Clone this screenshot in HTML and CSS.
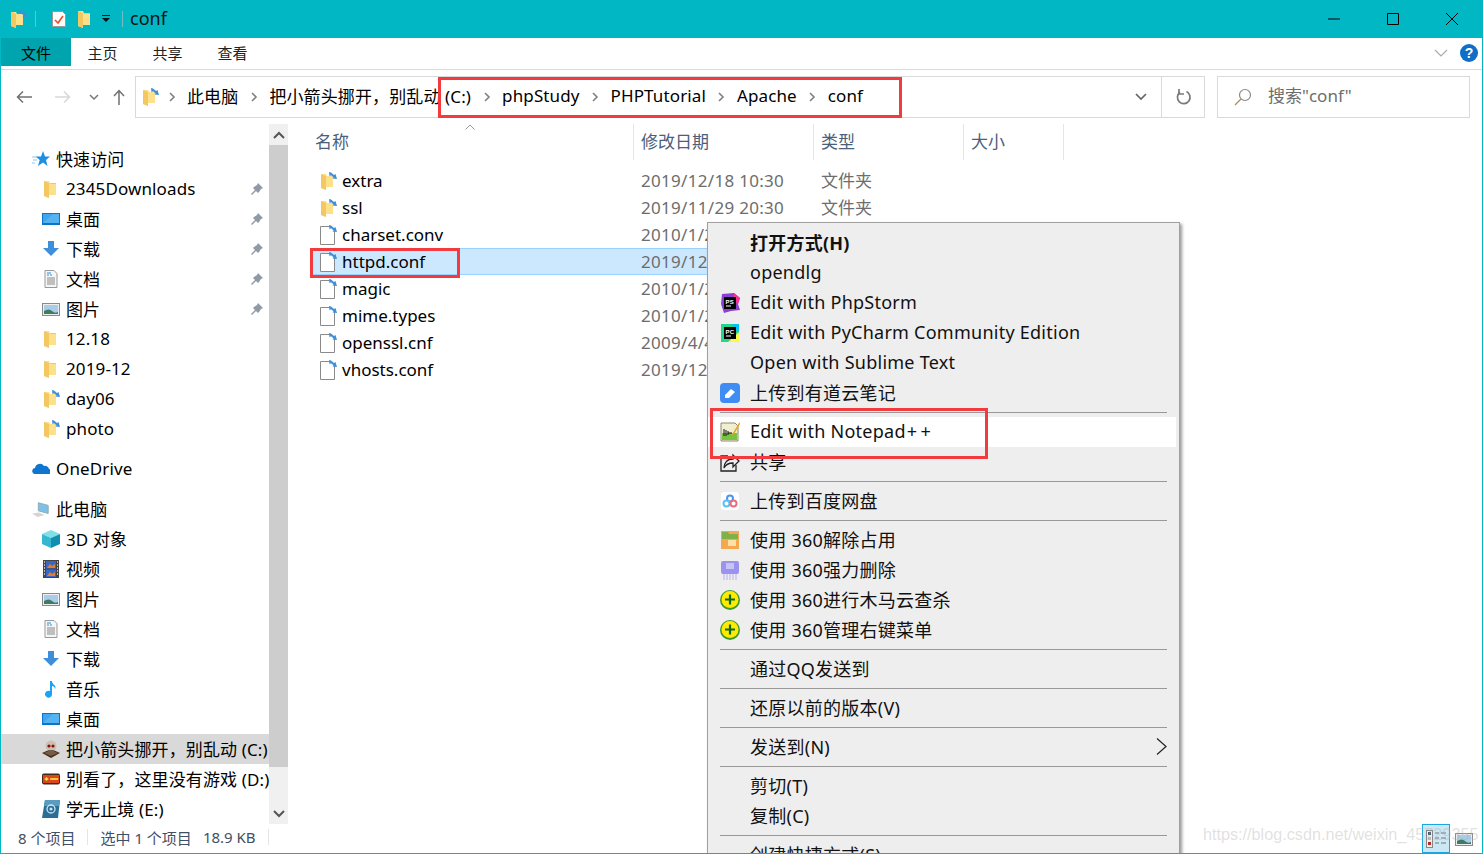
FILE: index.html
```html
<!DOCTYPE html>
<html lang="zh-CN">
<head>
<meta charset="utf-8">
<title>conf</title>
<link rel="stylesheet" href="styles.css">
</head>
<body>
<svg class="defs" width="0" height="0" aria-hidden="true">
  <defs>
    <symbol id="folder" viewBox="0 0 18 18"><path d="M2 1h5l1 2h6v12H7v3l-5-2z" fill="#fde08a"/><path d="M2 1l5 2v15l-5-2z" fill="#f3c862"/><path d="M8 3h6v1H8z" fill="#f3c862"/></symbol>
    <symbol id="folderlink" viewBox="0 0 18 18"><path d="M2 2h5l1 2h6v11H7v3l-5-2z" fill="#fde08a"/><path d="M2 2l5 2v14l-5-2z" fill="#f3c862"/><path d="M10 0l2 .5 3 2.500 1.500-1L18 7l-4.500-.5 1-1.200-2.500-2-1.500 1z" fill="#3f8fd8"/></symbol>
    <symbol id="file" viewBox="0 0 18 20"><path d="M1.500 1.500h10l4 4v14h-14z" fill="#fff" stroke="#8a8a8a"/><path d="M10 0l2 .5 3 2.500 1.500-1L18 7l-4.500-.5 1-1.200-2.500-2-1.500 1z" fill="#3f8fd8"/></symbol>
    <symbol id="star" viewBox="0 0 18 18"><path d="M11 1l2 5.500h5l-4 3.500 1.500 6-4.500-3.500L6 16l1.700-6-4-3.500H9z" fill="#1c8fe3"/><path d="M0 7h5M1 10h4M0 13h3" stroke="#8cc6f0"/></symbol>
    <symbol id="desk" viewBox="0 0 18 18"><rect x="0" y="3" width="18" height="12" fill="#0d75c8"/><path d="M1 4h16v9H1z" fill="#3fa5ee"/><path d="M1 13L11 4h6v9z" fill="#54b4f2"/></symbol>
    <symbol id="down" viewBox="0 0 18 18"><path d="M6 1h6v7h5l-8 8-8-8h5z" fill="#3d8fdc"/></symbol>
    <symbol id="doc" viewBox="0 0 18 18"><path d="M3 .5h9l3 3v14H3z" fill="#f6f6f6" stroke="#999"/><path d="M5 3h4M5 5h2M8 5h2" stroke="#2f8ed6"/><path d="M5 8h8M5 10h8M5 12h8M5 14h8" stroke="#888"/></symbol>
    <symbol id="pic" viewBox="0 0 18 18"><rect x=".5" y="3.500" width="17" height="12" fill="#eee" stroke="#8a8a8a"/><rect x="2" y="5" width="14" height="9" fill="#a9cde8"/><path d="M2 11q5-3 8 0t6 1v2H2z" fill="#3f7a62"/></symbol>
    <symbol id="pin" viewBox="0 0 14 14"><path d="M8 1l5 5-2 1-2 3-1 1-2-2-4 4-1-1 4-4-2-2 1-1 3-2z" fill="#8f9aa6"/></symbol>
    <symbol id="cloud" viewBox="0 0 18 18"><path d="M1 13a3 3 0 0 1 2-5 5 5 0 0 1 9-2 4 4 0 0 1 5 3 2.500 2.500 0 0 1-1 5H3a2 2 0 0 1-2-1z" fill="#0f75cf"/></symbol>
    <symbol id="pc" viewBox="0 0 20 18"><path d="M7 2l11 3v9L7 11z" fill="#7fc0e8" stroke="#8aa"/><path d="M0 14l8-1 6 3-8 2z" fill="#d5d5d5"/></symbol>
    <symbol id="cube" viewBox="0 0 18 18"><path d="M9 0l9 4-9 4-9-4z" fill="#7fe0ea"/><path d="M0 4l9 4v10l-9-4z" fill="#35b8cf"/><path d="M18 4L9 8v10l9-4z" fill="#118fb0"/></symbol>
    <symbol id="film" viewBox="0 0 18 18"><rect x="1" width="16" height="18" fill="#444"/><rect x="4" y="1" width="10" height="7.500" fill="#3568c8"/><rect x="4" y="9.500" width="10" height="7.500" fill="#3568c8"/><path d="M5 8l3-4 2 2 3-2v4zM5 16l3-4 2 2 3-2v4z" fill="#e08030"/><path d="M2 2h1M2 5h1M2 8h1M2 11h1M2 14h1M15 2h1M15 5h1M15 8h1M15 11h1M15 14h1" stroke="#ddd" stroke-width="1.500"/></symbol>
    <symbol id="note" viewBox="0 0 18 18"><path d="M8 1h2c0 4 5 4 3 8 0-2-2-3-3-3v8a3.500 3.500 0 1 1-2-3z" fill="#1fa2f2"/></symbol>
    <symbol id="skull" viewBox="0 0 18 18"><path d="M0 13l9-4 9 4-9 5z" fill="#4a2f20"/><path d="M2 13l7-3 7 3-7 3z" fill="#7d5a3e"/><circle cx="9" cy="6" r="5.500" fill="#cfbfae"/><circle cx="7" cy="6" r="1.600" fill="#8a1010"/><circle cx="11" cy="6" r="1.600" fill="#8a1010"/><path d="M6 10h6v3H6z" fill="#6d5f52"/></symbol>
    <symbol id="game" viewBox="0 0 20 18"><rect y="3" width="20" height="12" rx="2" fill="#3a2a20"/><rect x="1" y="4.500" width="18" height="9" fill="#d9481c"/><path d="M3 9h4M5 7v4" stroke="#ffe14a" stroke-width="1.500"/><rect x="9" y="8" width="9" height="2" fill="#ffd23a"/></symbol>
    <symbol id="edrive" viewBox="0 0 18 18"><path d="M3 0h15l-2 18H0z" fill="#2b6f96"/><path d="M3 0h15l-1 6H2z" fill="#5a9cc0"/><circle cx="9" cy="9" r="4" fill="none" stroke="#cde6f5" stroke-width="1.300"/><circle cx="9" cy="9" r="1.500" fill="#cde6f5"/></symbol>
    <symbol id="ps" viewBox="0 0 20 20"><path d="M2 1l12-1 6 5-2 6 2 6-9 1-7 2-3-9z" fill="#8d3fd1"/><path d="M14 0l6 5-2 6-5-4z" fill="#ff318c"/><rect x="4" y="4" width="12" height="12" fill="#000"/><path d="M6 13h5" stroke="#fff"/><text x="5.500" y="10.500" class="logo-text">PS</text></symbol>
    <symbol id="pyc" viewBox="0 0 20 20"><path d="M1 1h18v18H1z" fill="#21d789"/><path d="M12 1h7v10z" fill="#07c3f2"/><path d="M8 19h11V9z" fill="#fcf84a"/><rect x="4" y="4" width="12" height="12" fill="#000"/><path d="M6 13h5" stroke="#fff"/><text x="5.500" y="10.500" class="logo-text">PC</text></symbol>
    <symbol id="youdao" viewBox="0 0 20 20"><rect width="20" height="20" rx="4" fill="#3f8cf5"/><path d="M5 12l6-6 4 3-6 6H5z" fill="#fff"/></symbol>
    <symbol id="npp" viewBox="0 0 20 20"><path d="M1 1h14l3 3v15H1z" fill="#f0efd2" stroke="#8a8a70"/><path d="M2 11h15v7H2z" fill="#78c440"/><path d="M4 7v7M6 8v6M8 9v4M8 11h4" stroke="#111" stroke-width="1"/><path d="M19.500 0l-6 10-2.500 4 3.500-2.500L20 2z" fill="#eba522"/></symbol>
    <symbol id="share" viewBox="0 0 20 20"><path d="M13 3v4C7 7 4 11 4 16c2-4 5-5 9-5v4l6-6z" fill="#eee" stroke="#222" stroke-width="1.300"/><path d="M8 4H1v15h15v-6" fill="none" stroke="#222" stroke-width="1.300"/></symbol>
    <symbol id="baidu" viewBox="0 0 20 20"><rect x="1" y="1" width="18" height="18" rx="3" fill="#fff"/><circle cx="10" cy="7.500" r="3" fill="none" stroke="#4b93f2" stroke-width="2"/><circle cx="6.500" cy="12.500" r="3" fill="none" stroke="#5fc0f0" stroke-width="2"/><circle cx="13.500" cy="12.500" r="3" fill="none" stroke="#f26a7a" stroke-width="2"/></symbol>
    <symbol id="s360a" viewBox="0 0 20 20"><rect x="1" y="1" width="18" height="18" fill="#f4a850"/><path d="M2 2h6l1 2h9v5H2z" fill="#7fb04a"/><rect x="8" y="10" width="8" height="6" fill="#fbe0a8"/></symbol>
    <symbol id="s360b" viewBox="0 0 20 20"><rect x="1" y="1" width="18" height="13" rx="2" fill="#9c93ef"/><rect x="6" y="3" width="8" height="6" fill="#c9c4f7"/><path d="M4 14v6M7 14v6M10 14v6M13 14v6M16 14v6" stroke="#b5aff3"/></symbol>
    <symbol id="s360c" viewBox="0 0 20 20"><circle cx="10" cy="10" r="10" fill="#3f9a2c"/><circle cx="10" cy="9.500" r="8.500" fill="#ffea00"/><path d="M10 4.500v10M5 9.500h10" stroke="#0a6a20" stroke-width="2.200"/></symbol>
    <symbol id="lchev" viewBox="0 0 10 12"><path d="M3 2l4 4-4 4" fill="none" stroke="#808080" stroke-width="1.600"/></symbol>
  </defs>
</svg>

<div class="window">
  <header class="titlebar">
    <svg class="ic18 qa1"><use href="#folderlink"/></svg>
    <span class="tsep"></span>
    <svg class="qa2" width="14" height="16" viewBox="0 0 14 16"><path d="M.5.500h10l3 3v12H.5z" fill="#fbfbfb" stroke="#999"/><path d="M3 9l3 3 5-7" fill="none" stroke="#e5502a" stroke-width="1.600"/></svg>
    <svg class="ic18 qa3"><use href="#folder"/></svg>
    <svg class="qa4" width="8" height="8" viewBox="0 0 8 8"><path d="M0 0h8v1H0zM0 3h8L4 7z" fill="#111"/></svg>
    <span class="tsep tsep-b"></span>
    <span class="title">conf</span>
    <div class="winbtns">
      <svg width="12" height="12" viewBox="0 0 12 12"><path d="M0 6h12" stroke="#000"/></svg>
      <svg width="12" height="12" viewBox="0 0 12 12"><path d="M.5.500h11v11H.5z" fill="none" stroke="#000"/></svg>
      <svg width="12" height="12" viewBox="0 0 12 12"><path d="M0 0l12 12M12 0L0 12" stroke="#000"/></svg>
    </div>
  </header>

  <nav class="ribbon">
    <span class="tab tab-file">文件</span>
    <span class="tab">主页</span>
    <span class="tab">共享</span>
    <span class="tab">查看</span>
    <svg class="ribchev" width="14" height="8" viewBox="0 0 14 8"><path d="M1 1l6 6 6-6" fill="none" stroke="#aaa" stroke-width="1.200"/></svg>
    <span class="help">?</span>
  </nav>

  <div class="addrrow">
    <svg class="navbtn nb-back" width="16" height="14" viewBox="0 0 16 14"><path d="M16 7H2M7 1.500L1.500 7 7 12.500" fill="none" stroke="#707070" stroke-width="1.500"/></svg>
    <svg class="navbtn nb-fwd" width="16" height="14" viewBox="0 0 16 14"><path d="M0 7h14M9 1.500L14.500 7 9 12.500" fill="none" stroke="#d8d8d8" stroke-width="1.500"/></svg>
    <svg class="navbtn nb-drop" width="10" height="7" viewBox="0 0 10 7"><path d="M1 1l4 4 4-4" fill="none" stroke="#777" stroke-width="1.500"/></svg>
    <svg class="navbtn nb-up" width="12" height="16" viewBox="0 0 12 16"><path d="M6 16V2M1 7l5-5.500L11 7" fill="none" stroke="#707070" stroke-width="1.500"/></svg>
    <div class="addr">
      <div class="crumbs">
        <svg class="ic18"><use href="#folderlink"/></svg>
        <svg class="chev first"><use href="#lchev"/></svg><span>此电脑</span>
        <svg class="chev"><use href="#lchev"/></svg><span>把小箭头挪开，别乱动 (C:)</span>
        <svg class="chev"><use href="#lchev"/></svg><span>phpStudy</span>
        <svg class="chev"><use href="#lchev"/></svg><span>PHPTutorial</span>
        <svg class="chev"><use href="#lchev"/></svg><span>Apache</span>
        <svg class="chev"><use href="#lchev"/></svg><span>conf</span>
      </div>
      <div class="addrdrop"><svg width="12" height="8" viewBox="0 0 12 8"><path d="M1 1l5 5 5-5" fill="none" stroke="#666" stroke-width="1.700"/></svg></div>
      <div class="refresh"><svg width="16" height="16" viewBox="0 0 16 16"><path d="M10.500 2.600A6.300 6.300 0 1 1 4 3.200" fill="none" stroke="#7a7a7a" stroke-width="1.700"/><path d="M3 0v5h5" fill="none" stroke="#7a7a7a" stroke-width="1.700"/></svg></div>
    </div>
    <div class="search">
      <svg width="18" height="18" viewBox="0 0 18 18"><circle cx="11" cy="7" r="5.500" fill="none" stroke="#8a8a8a" stroke-width="1.200"/><path d="M7 11l-6 6" stroke="#b08a60" stroke-width="1.300"/></svg>
      <span>搜索"conf"</span>
    </div>
  </div>

  <div class="body">
    <aside class="sidebar">
      <div class="navlist">
        <div class="nav top"><svg class="ic18"><use href="#star"/></svg><span>快速访问</span></div>
        <div class="nav"><svg class="ic18"><use href="#folder"/></svg><span>2345Downloads</span><svg class="pin"><use href="#pin"/></svg></div>
        <div class="nav"><svg class="ic18"><use href="#desk"/></svg><span>桌面</span><svg class="pin"><use href="#pin"/></svg></div>
        <div class="nav"><svg class="ic18"><use href="#down"/></svg><span>下载</span><svg class="pin"><use href="#pin"/></svg></div>
        <div class="nav"><svg class="ic18"><use href="#doc"/></svg><span>文档</span><svg class="pin"><use href="#pin"/></svg></div>
        <div class="nav"><svg class="ic18"><use href="#pic"/></svg><span>图片</span><svg class="pin"><use href="#pin"/></svg></div>
        <div class="nav"><svg class="ic18"><use href="#folder"/></svg><span>12.18</span></div>
        <div class="nav"><svg class="ic18"><use href="#folder"/></svg><span>2019-12</span></div>
        <div class="nav"><svg class="ic18"><use href="#folderlink"/></svg><span>day06</span></div>
        <div class="nav"><svg class="ic18"><use href="#folderlink"/></svg><span>photo</span></div>
        <div class="nav top gap"><svg class="ic18"><use href="#cloud"/></svg><span>OneDrive</span></div>
        <div class="nav top gap"><svg class="ic18"><use href="#pc"/></svg><span>此电脑</span></div>
        <div class="nav"><svg class="ic18"><use href="#cube"/></svg><span>3D 对象</span></div>
        <div class="nav"><svg class="ic18"><use href="#film"/></svg><span>视频</span></div>
        <div class="nav"><svg class="ic18"><use href="#pic"/></svg><span>图片</span></div>
        <div class="nav"><svg class="ic18"><use href="#doc"/></svg><span>文档</span></div>
        <div class="nav"><svg class="ic18"><use href="#down"/></svg><span>下载</span></div>
        <div class="nav"><svg class="ic18"><use href="#note"/></svg><span>音乐</span></div>
        <div class="nav"><svg class="ic18"><use href="#desk"/></svg><span>桌面</span></div>
        <div class="nav sel"><svg class="ic18"><use href="#skull"/></svg><span>把小箭头挪开，别乱动 (C:)</span></div>
        <div class="nav"><svg class="ic18"><use href="#game"/></svg><span>别看了，这里没有游戏 (D:)</span></div>
        <div class="nav"><svg class="ic18"><use href="#edrive"/></svg><span>学无止境 (E:)</span></div>
      </div>
      <div class="scroll">
        <div class="sbtn"><svg width="12" height="8" viewBox="0 0 12 8"><path d="M1 7l5-5 5 5" fill="none" stroke="#555" stroke-width="2"/></svg></div>
        <div class="thumb"></div>
        <div class="track"></div>
        <div class="sbtn"><svg width="12" height="8" viewBox="0 0 12 8"><path d="M1 1l5 5 5-5" fill="none" stroke="#555" stroke-width="2"/></svg></div>
      </div>
    </aside>

    <main class="files">
      <svg class="sortcaret" width="10" height="6" viewBox="0 0 10 6"><path d="M.5 5.500L5 1l4.500 4.500" fill="none" stroke="#9a9a9a"/></svg>
      <div class="head">
        <span class="c-name">名称</span>
        <span class="c-date">修改日期</span>
        <span class="c-type">类型</span>
        <span class="c-size">大小</span>
      </div>
      <div class="rows">
        <div class="row"><span class="n"><svg class="ic18"><use href="#folderlink"/></svg>extra</span><span class="c-date d">2019/12/18 10:30</span><span class="c-type d">文件夹</span></div>
        <div class="row"><span class="n"><svg class="ic18"><use href="#folderlink"/></svg>ssl</span><span class="c-date d">2019/11/29 20:30</span><span class="c-type d">文件夹</span></div>
        <div class="row"><span class="n"><svg class="ic-file"><use href="#file"/></svg>charset.conv</span><span class="c-date d">2010/1/27 18:13</span></div>
        <div class="row selected"><span class="n"><svg class="ic-file"><use href="#file"/></svg>httpd.conf</span><span class="c-date d">2019/12/18 10:30</span></div>
        <div class="row"><span class="n"><svg class="ic-file"><use href="#file"/></svg>magic</span><span class="c-date d">2010/1/27 18:13</span></div>
        <div class="row"><span class="n"><svg class="ic-file"><use href="#file"/></svg>mime.types</span><span class="c-date d">2010/1/27 18:13</span></div>
        <div class="row"><span class="n"><svg class="ic-file"><use href="#file"/></svg>openssl.cnf</span><span class="c-date d">2009/4/4 20:30</span></div>
        <div class="row"><span class="n"><svg class="ic-file"><use href="#file"/></svg>vhosts.conf</span><span class="c-date d">2019/12/18 10:30</span></div>
      </div>
    </main>
  </div>

  <footer class="status">
    <span class="st1">8 个项目</span>
    <span class="st-sep"></span>
    <span class="st2">选中 1 个项目</span>
    <span class="st3">18.9 KB</span>
    <span class="st-sep"></span>
    <div class="views">
      <span class="view on"><svg width="20" height="18" viewBox="0 0 20 18"><rect x=".5" y=".5" width="6" height="17" fill="#eee" stroke="#888"/><rect x="2" y="2" width="3" height="3" fill="#456"/><rect x="2" y="7" width="3" height="3" fill="#bbb"/><rect x="2" y="12" width="3" height="3" fill="#b03020"/><path d="M9 3h4M15 3h5M9 8h4M15 8h5M9 13h4M15 13h5" stroke="#777"/></svg></span>
      <span class="view plain"><svg width="18" height="18"><use href="#pic"/></svg></span>
    </div>
    <span class="watermark">https://blog.csdn.net/weixin_45729355</span>
  </footer>

  <div class="menu">
    <div class="mi bold"><span class="mic"></span>打开方式(H)</div>
    <div class="mi"><span class="mic"></span>opendlg</div>
    <div class="mi"><svg class="mic"><use href="#ps"/></svg>Edit with PhpStorm</div>
    <div class="mi"><svg class="mic"><use href="#pyc"/></svg>Edit with PyCharm Community Edition</div>
    <div class="mi"><span class="mic"></span>Open with Sublime Text</div>
    <div class="mi"><svg class="mic"><use href="#youdao"/></svg>上传到有道云笔记</div>
    <hr class="msep">
    <div class="mi hover"><svg class="mic"><use href="#npp"/></svg>Edit with Notepad<span class="pp">++</span></div>
    <div class="mi"><svg class="mic"><use href="#share"/></svg>共享</div>
    <hr class="msep">
    <div class="mi"><svg class="mic"><use href="#baidu"/></svg>上传到百度网盘</div>
    <hr class="msep">
    <div class="mi"><svg class="mic"><use href="#s360a"/></svg>使用 360解除占用</div>
    <div class="mi"><svg class="mic"><use href="#s360b"/></svg>使用 360强力删除</div>
    <div class="mi"><svg class="mic"><use href="#s360c"/></svg>使用 360进行木马云查杀</div>
    <div class="mi"><svg class="mic"><use href="#s360c"/></svg>使用 360管理右键菜单</div>
    <hr class="msep">
    <div class="mi"><span class="mic"></span>通过QQ发送到</div>
    <hr class="msep">
    <div class="mi"><span class="mic"></span>还原以前的版本(V)</div>
    <hr class="msep">
    <div class="mi"><span class="mic"></span>发送到(N)<svg class="subarrow" width="11" height="17" viewBox="0 0 11 17"><path d="M1 .5l9 8-9 8" fill="none" stroke="#222" stroke-width="1.200"/></svg></div>
    <hr class="msep">
    <div class="mi"><span class="mic"></span>剪切(T)</div>
    <div class="mi"><span class="mic"></span>复制(C)</div>
    <hr class="msep">
    <div class="mi"><span class="mic"></span>创建快捷方式(S)</div>
  </div>

  <div class="redbox rb-addr"></div>
  <div class="redbox rb-file"></div>
  <div class="redbox rb-menu"></div>
</div>
</body>
</html>
```

FILE: styles.css
```css
* { box-sizing: border-box; }
html, body { margin: 0; padding: 0; height: 100%; overflow: hidden; }
body { background: #fff; font-family: "Noto Sans", "Noto Sans CJK SC", sans-serif; font-size: 17px; color: #000; }
.defs { position: absolute; }
.logo-text { font: 700 6px "Liberation Sans", sans-serif; fill: #fff; }

.window { position: relative; width: 1483px; height: 854px; border: 1px solid #00b7c3; border-top: 0; display: flex; flex-direction: column; overflow: hidden; }

.titlebar { height: 38px; flex: none; margin: 0 -1px; background: #00b7c3; display: flex; align-items: center; }
.ic18 { width: 18px; height: 18px; flex: none; }
.ic-file { width: 18px; height: 20px; flex: none; }
.qa1 { margin-left: 9px; }
.tsep { width: 1px; height: 16px; background: #6fbfc5; margin-left: 8px; }
.qa2 { margin-left: 16px; }
.qa3 { margin-left: 10px; }
.qa4 { margin-left: 8px; }
.tsep-b { margin-left: 12px; }
.title { margin-left: 7px; padding-bottom: 2px; font-size: 18px; color: #111; }
.winbtns { margin-left: auto; display: flex; gap: 47px; padding-right: 25px; }

.ribbon { height: 32px; flex: none; border-bottom: 1px solid #dadada; display: flex; align-items: flex-start; font-size: 15px; color: #222; }
.tab { width: 65px; height: 28px; display: flex; align-items: center; justify-content: center; }
.tab-file { width: 70px; background: #00a4ae; color: #000; }
.tab-file + .tab { margin-left: -1px; }
.ribchev { margin: 11px 0 0 auto; }
.help { width: 18px; height: 18px; margin: 6px 4px 0 12px; border-radius: 50%; background: #0f6fc6; color: #fff; font: 700 14px/18px "Liberation Sans", sans-serif; text-align: center; }

.addrrow { height: 54px; flex: none; display: flex; align-items: center; padding: 0 12px 0 0; }
.navbtn { flex: none; }
.nb-back { margin-left: 15px; }
.nb-fwd { margin-left: 23px; }
.nb-drop { margin-left: 18px; }
.nb-up { margin-left: 14px; }
.addr { margin-left: 10px; width: 1070px; height: 42px; border: 1px solid #d9d9d9; display: flex; align-items: stretch; }
.crumbs { flex: 1; display: flex; align-items: center; padding: 0 0 4px 5px; white-space: nowrap; font-size: 17px; letter-spacing: .12px; }
.crumbs svg { margin-top: 4px; }
.chev { width: 10px; height: 12px; flex: none; margin: 4px 10.500px 0; }
.chev.first { margin-left: 8px; margin-right: 10px; }
.addrdrop { width: 42px; padding-left: 2px; display: flex; align-items: center; justify-content: center; }
.refresh { width: 43px; padding-left: 1px; border-left: 1px solid #d9d9d9; display: flex; align-items: center; justify-content: center; }
.search { margin-left: 12px; width: 253px; height: 42px; border: 1px solid #d9d9d9; display: flex; align-items: center; gap: 16px; padding: 0 0 6px 16px; color: #6d6d6d; }
.search svg { margin-top: 6px; }

.body { flex: 1; min-height: 0; display: flex; }
.sidebar { width: 287px; flex: none; display: flex; }
.navlist { width: 268px; flex: none; padding-top: 20px; overflow: hidden; }
.nav { height: 30px; display: flex; align-items: center; padding: 0 0 2px 41px; gap: 6px; white-space: nowrap; position: relative; letter-spacing: .12px; }
.nav .ic18 { margin-top: 2px; }
.nav.top { padding-left: 31px; }
.nav.gap { margin-top: 10px; }
.nav.sel { background: #d9d9d9; }
.pin { width: 14px; height: 14px; position: absolute; left: 249px; top: 8px; }
.scroll { width: 19px; flex: none; display: flex; flex-direction: column; background: #f0f0f0; }
.sbtn { height: 21px; flex: none; display: flex; align-items: center; justify-content: center; }
.thumb { height: 622px; background: #cdcdcd; flex: none; }
.track { flex: 1; }

.files { flex: 1; position: relative; min-width: 0; }
.sortcaret { position: absolute; left: 177px; top: 0; }
.head { height: 36px; display: flex; align-items: center; color: #4c607a; }
.c-name { width: 346px; padding-left: 27px; flex: none; }
.c-date { width: 180px; padding-left: 7px; flex: none; }
.c-type { width: 150px; padding-left: 7px; flex: none; }
.c-size { width: 100px; padding-left: 7px; flex: none; }
.head span { height: 36px; padding-bottom: 3px; display: flex; align-items: center; border-right: 1px solid #e5e5e5; }
.rows { padding-top: 7px; width: 775px; }
.row { height: 27px; display: flex; align-items: center; margin-left: 24px; border: 1px solid transparent; white-space: nowrap; }
.row.selected { background: #cce8ff; border-color: #99d1ff; }
.n { width: 321px; padding: 0 0 1px 6px; display: flex; align-items: center; gap: 5px; }
.n svg { margin-top: 1px; }
.d { color: #6d6d6d; }
.c-date.d { letter-spacing: .3px; }
.c-type.d { padding-bottom: 2px; }

.status { height: 29px; flex: none; display: flex; align-items: center; padding-bottom: 3px; font-size: 15px; color: #3f4f66; position: relative; }
.st1 { margin-left: 17px; }
.st-sep { width: 1px; height: 16px; background: #e5e5e5; margin-left: 12px; }
.st2 { margin-left: 12px; }
.st3 { margin-left: 11px; }
.views { position: absolute; right: 9px; bottom: 0; display: flex; gap: 5px; align-items: center; height: 29px; }
.view { width: 28px; height: 29px; display: flex; align-items: center; justify-content: center; }
.view.plain { width: 18px; }
.view.on { background: #cce8f5; border: 1px solid #1ba7de; }
.watermark { position: absolute; left: 1202px; top: 1px; font: 16.200px "Liberation Sans", sans-serif; color: rgba(170,170,170,.36); white-space: nowrap; }

.menu { position: absolute; left: 706px; top: 222px; width: 473px; height: 700px; background: #eeeeee; border: 1px solid #a0a0a0; padding: 5px 12px 0 0; box-shadow: 2px 2px 3px rgba(0,0,0,.4); font-size: 18px; letter-spacing: .25px; }
.mi { height: 30px; display: flex; align-items: center; padding-bottom: 2px; color: #111; white-space: nowrap; position: relative; margin-right: -9px; }
.mi.bold { font-weight: 700; }
.mi.hover { background: #fff; }
.mic { width: 20px; height: 20px; flex: none; margin: 2px 10px 0 12px; }
.pp { letter-spacing: 3.500px; margin-left: 1px; }
.msep { height: 1px; border: 0; background: #999; margin: 4px 0 4px 12px; }
.subarrow { position: absolute; left: 448px; top: 6px; }

.redbox { position: absolute; border: 3px solid #f33a3e; pointer-events: none; }
.rb-addr { left: 437px; top: 77px; width: 464px; height: 41px; }
.rb-file { left: 309px; top: 248px; width: 150px; height: 30px; }
.rb-menu { left: 709px; top: 408px; width: 278px; height: 51px; }
```
